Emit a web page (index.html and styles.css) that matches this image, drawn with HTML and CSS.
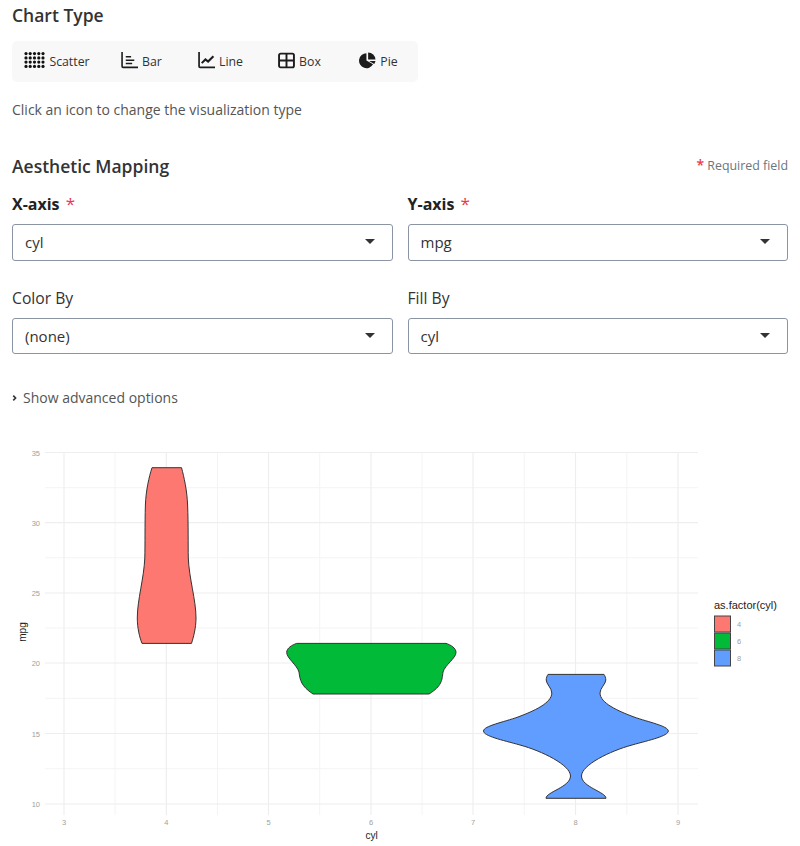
FILE: index.html
```html
<!DOCTYPE html>
<html>
<head>
  <title>Chart Builder</title>
  <link rel="stylesheet" href="styles.css">
</head>
<body>

<h2 class="section-title">Chart Type</h2>

<div class="chart-types">
  <button class="type-btn">
    <svg class="icon icon-wide" viewBox="0 0 21 16" fill="#111">
      <circle cx="2" cy="1.6" r="1.6"/><circle cx="6.2" cy="1.6" r="1.6"/><circle cx="10.5" cy="1.6" r="1.6"/><circle cx="14.8" cy="1.6" r="1.6"/><circle cx="19" cy="1.6" r="1.6"/>
      <circle cx="2" cy="5.9" r="1.6"/><circle cx="6.2" cy="5.9" r="1.6"/><circle cx="10.5" cy="5.9" r="1.6"/><circle cx="14.8" cy="5.9" r="1.6"/><circle cx="19" cy="5.9" r="1.6"/>
      <circle cx="2" cy="10.1" r="1.6"/><circle cx="6.2" cy="10.1" r="1.6"/><circle cx="10.5" cy="10.1" r="1.6"/><circle cx="14.8" cy="10.1" r="1.6"/><circle cx="19" cy="10.1" r="1.6"/>
      <circle cx="2" cy="14.4" r="1.6"/><circle cx="6.2" cy="14.4" r="1.6"/><circle cx="10.5" cy="14.4" r="1.6"/><circle cx="14.8" cy="14.4" r="1.6"/><circle cx="19" cy="14.4" r="1.6"/>
    </svg>
    Scatter
  </button>
  <button class="type-btn">
    <svg class="icon" viewBox="0 0 16 16" fill="none" stroke="#1c1c1c" stroke-width="1.5">
      <path d="M1 0v13.5q0 1 1 1h14"/>
      <path d="M4.5 4.5h5M4.5 7.7h8M4.5 10.8h6"/>
    </svg>
    Bar
  </button>
  <button class="type-btn">
    <svg class="icon" viewBox="0 0 16 16" fill="none" stroke="#1c1c1c" stroke-width="1.6">
      <path d="M1 0v13.5q0 1 1 1h14"/>
      <path d="M3.5 10.5l3.5-3.5 2.5 2 5-5" stroke-width="1.9"/>
    </svg>
    Line
  </button>
  <button class="type-btn">
    <svg class="icon" viewBox="0 0 16 16" fill="none" stroke="#1c1c1c" stroke-width="1.8">
      <rect x="1" y="1.5" width="14" height="13" rx="1.5"/>
      <path d="M1 8h14M8 1.5v13"/>
    </svg>
    Box
  </button>
  <button class="type-btn">
    <svg class="icon" viewBox="0 0 16 16" fill="#1c1c1c">
      <path d="M7 1.2a7 7 0 1 0 6.2 10.3L7 8z"/>
      <path d="M8.6 0.5a7 7 0 0 1 6.9 6.6H8.6z"/>
      <path d="M9.5 8.5h6a7 7 0 0 1-1.2 2.8z"/>
    </svg>
    Pie
  </button>
</div>

<p class="help-text">Click an icon to change the visualization type</p>

<div class="mapping-head">
  <h2 class="section-title">Aesthetic Mapping</h2>
  <span class="required-note"><span class="req">*</span> Required field</span>
</div>

<div class="field-grid">
  <div class="field">
    <label class="field-label strong">X-axis <span class="req">*</span></label>
    <div class="select tall">cyl</div>
  </div>
  <div class="field">
    <label class="field-label strong">Y-axis <span class="req">*</span></label>
    <div class="select tall">mpg</div>
  </div>
  <div class="field">
    <label class="field-label">Color By</label>
    <div class="select">(none)</div>
  </div>
  <div class="field">
    <label class="field-label">Fill By</label>
    <div class="select">cyl</div>
  </div>
</div>

<div class="advanced">
  <svg class="chevron" viewBox="0 0 6 8" fill="none" stroke="#333" stroke-width="1.9"><path d="M1.5 1.2L4.3 4 1.5 6.8"/></svg>
  Show advanced options
</div>

<svg class="plot" viewBox="12 430 776 416">
  <!-- minor grid -->
  <g stroke="#f4f4f4" stroke-width="1" fill="none">
    <path d="M45 487.7H698M45 557.8H698M45 628H698M45 698.3H698M45 768.7H698"/>
    <path d="M115 452V815M217.5 452V815M319.7 452V815M422 452V815M524.2 452V815M626.8 452V815"/>
  </g>
  <!-- major grid -->
  <g stroke="#eeeeee" stroke-width="1.2" fill="none">
    <path d="M45 452.5H698M45 522.7H698M45 593H698M45 663H698M45 733.5H698M45 804H698"/>
    <path d="M64 452V815M166.3 452V815M268.5 452V815M371 452V815M473 452V815M575.5 452V815M678 452V815"/>
  </g>

  <path class="violin" fill="#fd7870" d="M152 467.7H181.5C184 477 187 490 187.6 505C188.4 525 188 545 188.3 558C189 578 196 600 196 618C196 628 193.5 637 191.5 643.4H142C139.5 637 137.3 628 137.3 618C137.3 600 144 578 144.8 558C145.2 545 144.8 525 145.4 505C146 490 149 477 152 467.7Z"/>
  <path class="violin" fill="#00ba38" d="M296.7 643.4H446C451 645 456 648 456 652.5C456 658 445 665 443 672C442 680 442 686 429 694H313C301 686 300 680 299 672C297 665 286.7 658 286.7 652.5C286.7 648 292 645 296.7 643.4Z"/>
  <path class="violin" fill="#619cff" d="M548 674.4H604C605 676 605.8 678 605.8 680C605.8 684 600 688 600 693C600 703 618 711 634 717C648 722 668.3 726 668.3 731C668.3 736 650 740 632 745C610 751 581.5 765 581.5 776C581.5 787 606 792 606 798.3H546C546 792 570.5 787 570.5 776C570.5 765 542 751 520 745C502 740 483.5 736 483.5 731C483.5 726 504 722 518 717C534 711 551.8 703 551.8 693C551.8 688 546.2 684 546.2 680C546.2 678 547 676 548 674.4Z"/>

  <g class="tick" text-anchor="end">
    <text x="40" y="455.5">35</text>
    <text x="40" y="525.5">30</text>
    <text x="40" y="596">25</text>
    <text x="40" y="666">20</text>
    <text x="40" y="736.5">15</text>
    <text x="40" y="807">10</text>
  </g>
  <g class="tick" text-anchor="middle">
    <text x="64" y="825">3</text>
    <text x="166.3" y="825">4</text>
    <text x="268.5" y="825">5</text>
    <text x="371" y="825">6</text>
    <text x="473" y="825">7</text>
    <text x="575.5" y="825">8</text>
    <text x="678" y="825">9</text>
  </g>
  <text class="axis-title" x="371.5" y="839" text-anchor="middle">cyl</text>
  <text class="axis-title" transform="translate(25.5 632) rotate(-90)" text-anchor="middle">mpg</text>

  <text class="legend-title" x="714" y="609">as.factor(cyl)</text>
  <g stroke="#444" stroke-width="1">
    <rect x="714.5" y="616" width="16" height="16" fill="#fd7870"/>
    <rect x="714.5" y="633" width="16" height="16" fill="#00ba38"/>
    <rect x="714.5" y="650" width="16" height="16" fill="#619cff"/>
  </g>
  <g class="tick">
    <text x="737" y="626.5">4</text>
    <text x="737" y="643.5">6</text>
    <text x="737" y="660.5">8</text>
  </g>
</svg>

</body>
</html>
```

FILE: styles.css
```css
html, body {
  overflow: hidden;
}

body {
  margin: 0;
  padding: 4px 12px 0 12px;
  font-family: 'Open Sans', sans-serif;
  color: #333;
  background: #ffffff;
}

.section-title {
  margin: 0;
  font-size: 17.5px;
  line-height: 22px;
  font-weight: 600;
  color: #333;
}

.chart-types {
  display: grid;
  grid-template-columns: 90px 79px 79px 79px 79px;
  width: 406px;
  height: 41px;
  margin-top: 15px;
  background: #f8f8f8;
  border-radius: 5px;
}

.type-btn {
  display: flex;
  align-items: center;
  justify-content: center;
  gap: 4px;
  padding: 0;
  border: none;
  background: none;
  font-family: inherit;
  font-size: 12.3px;
  color: #333;
}

.icon {
  width: 17px;
  height: 17px;
  margin-top: -3px;
}

.icon-wide {
  width: 21px;
  height: 16px;
}

.help-text {
  margin: 18px 0 0 0;
  font-size: 14px;
  line-height: 20px;
  color: #555;
}

.mapping-head {
  display: flex;
  justify-content: space-between;
  align-items: center;
  margin-top: 34px;
}

.mapping-head .section-title {
  line-height: 24px;
}

.required-note {
  font-size: 12.4px;
  color: #6c757d;
  margin-top: -4px;
}

.req {
  color: #e8384f;
}

.required-note .req {
  font-size: 14px;
  font-weight: 600;
}

.field-grid {
  display: grid;
  grid-template-columns: 1fr 1fr;
  column-gap: 15px;
  row-gap: 27px;
  margin-top: 16px;
}

.field-label {
  display: block;
  font-size: 15.7px;
  line-height: 20px;
  margin-bottom: 10px;
  color: #333;
}

.field-label.strong {
  font-size: 16px;
  font-weight: 700;
  color: #222;
}

.field-label.strong .req {
  margin-left: 2px;
  font-size: 17px;
  font-weight: 400;
}

.select {
  position: relative;
  box-sizing: border-box;
  height: 36px;
  line-height: 35px;
  padding-left: 12px;
  font-size: 15px;
  color: #333;
  border: 1px solid #8a94a3;
  border-radius: 3px;
  background: #fff;
}

.select.tall {
  height: 37px;
}

.select::after {
  content: "";
  position: absolute;
  right: 17px;
  top: 14px;
  border-left: 5px solid transparent;
  border-right: 5px solid transparent;
  border-top: 5px solid #333;
}

.advanced {
  display: flex;
  align-items: center;
  gap: 6px;
  margin-top: 34px;
  font-size: 14px;
  line-height: 20px;
  color: #555;
}

.chevron {
  width: 5px;
  height: 8px;
}

.plot {
  display: block;
  width: 776px;
  height: 416px;
  margin-top: 22px;
}

.violin {
  stroke: #333;
  stroke-width: 1;
}

.tick {
  font-family: 'Liberation Sans', sans-serif;
  font-size: 7.5px;
  fill: #a0a0a0;
}

.axis-title {
  font-family: 'Liberation Sans', sans-serif;
  font-size: 10px;
  fill: #222;
}

.legend-title {
  font-family: 'Liberation Sans', sans-serif;
  font-size: 11px;
  fill: #222;
}
```
